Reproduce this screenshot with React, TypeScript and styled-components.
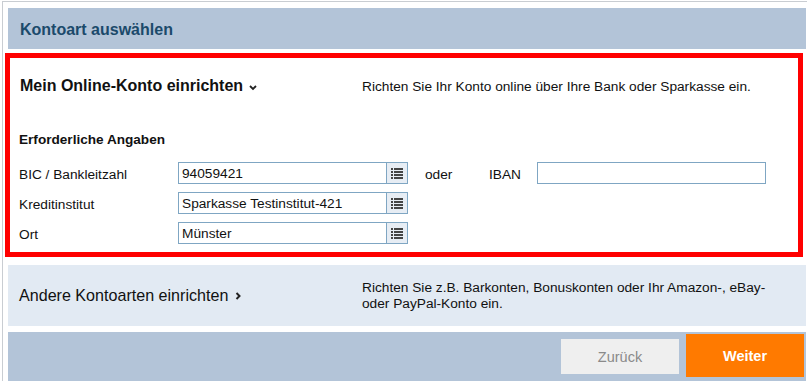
import React from 'react';
import styled, { createGlobalStyle } from 'styled-components';

const GlobalStyle = createGlobalStyle`
  body {
    margin: 0;
    background: #fff;
    font-family: "Liberation Sans", Arial, sans-serif;
    color: #111;
  }
`;

const ListIcon = () => (
  <svg width="14" height="14" viewBox="0 0 14 14">
    {[2, 5, 8, 11].map((y) => (
      <g key={y} fill="#444">
        <rect x="1" y={y} width="2" height="2" />
        <rect x="4" y={y} width="9" height="2" />
      </g>
    ))}
  </svg>
);

const Field = ({ value }: { value: string }) => (
  <FieldWrap>
    <Input defaultValue={value} />
    <ListButton>
      <ListIcon />
    </ListButton>
  </FieldWrap>
);

const App = () => {
  return (
    <>
      <GlobalStyle />
      <Frame>
        <Header>Kontoart auswählen</Header>

        <OnlinePanel>
          <TopRow>
            <Title>
              Mein Online-Konto einrichten
              <svg width="10" height="8" viewBox="0 0 10 8">
                <path d="M2 2 L5 5 L8 2" stroke="#222" strokeWidth="1.8" fill="none" />
              </svg>
            </Title>
            <Desc>Richten Sie Ihr Konto online über Ihre Bank oder Sparkasse ein.</Desc>
          </TopRow>

          <SubHeading>Erforderliche Angaben</SubHeading>

          <FormGrid>
            <Label>BIC / Bankleitzahl</Label>
            <Field value="94059421" />
            <Oder>oder</Oder>
            <IbanLabel>IBAN</IbanLabel>
            <IbanInput />

            <Label>Kreditinstitut</Label>
            <Field value="Sparkasse Testinstitut-421" />
            <span />
            <span />
            <span />

            <Label>Ort</Label>
            <Field value="Münster" />
          </FormGrid>
        </OnlinePanel>

        <OtherPanel>
          <OtherTitle>
            Andere Kontoarten einrichten
            <svg width="8" height="10" viewBox="0 0 8 10">
              <path d="M2.5 2 L5.5 5 L2.5 8" stroke="#222" strokeWidth="2" fill="none" />
            </svg>
          </OtherTitle>
          <OtherDesc>
            Richten Sie z.B. Barkonten, Bonuskonten oder Ihr Amazon-, eBay- oder PayPal-Konto ein.
          </OtherDesc>
        </OtherPanel>

        <Footer>
          <BackButton>Zurück</BackButton>
          <NextButton>Weiter</NextButton>
        </Footer>
      </Frame>
    </>
  );
};

const Frame = styled.div`
  margin: 1px 0 0 2px;
  border-top: 1px solid #c9cdd2;
  border-left: 1px solid #c9cdd2;
  padding: 6px 0 0 5px;
  display: flex;
  flex-direction: column;
  height: 380px;
  box-sizing: border-box;
  overflow: hidden;
  & > * {
    flex-shrink: 0;
  }
`;

const Header = styled.div`
  height: 41px;
  margin-right: 1px;
  background: #b3c4d8;
  color: #1b4a6b;
  font-weight: bold;
  font-size: 16px;
  display: flex;
  align-items: center;
  padding-left: 12px;
  padding-top: 2px;
  box-sizing: border-box;
`;

const OnlinePanel = styled.div`
  margin: 4px 4px 0 -3px;
  border: 5px solid #f00;
  height: 204px;
  box-sizing: border-box;
  padding: 18px 0 0 9px;
`;

const TopRow = styled.div`
  display: grid;
  grid-template-columns: 343px 1fr;
  align-items: center;
  height: 20px;
`;

const Title = styled.div`
  font-size: 16px;
  font-weight: bold;
  color: #111;
  display: flex;
  align-items: center;
  gap: 5px;
  padding-left: 1px;
  svg {
    margin-top: 3px;
  }
`;

const Desc = styled.div`
  font-size: 13.7px;
  color: #111;
`;

const SubHeading = styled.div`
  font-size: 13.6px;
  font-weight: bold;
  margin-top: 36px;
  height: 16px;
`;

const FormGrid = styled.div`
  display: grid;
  grid-template-columns: 159px 230px 81px 48px 229px;
  grid-auto-rows: 22px;
  row-gap: 8px;
  align-items: center;
  margin-top: 14px;
  font-size: 13.7px;
`;

const Label = styled.span`
  font-size: 13.7px;
  padding-top: 3px;
`;

const FieldWrap = styled.div`
  display: flex;
  height: 22px;
`;

const Input = styled.input`
  width: 208px;
  height: 22px;
  box-sizing: border-box;
  border: 1px solid #7fa6c3;
  border-right: none;
  padding: 0 3px;
  font-family: "Liberation Sans", Arial, sans-serif;
  font-size: 13.7px;
  color: #111;
  outline: none;
`;

const ListButton = styled.div`
  width: 22px;
  height: 22px;
  box-sizing: border-box;
  border: 1px solid #7fa6c3;
  background: #e7edf4;
  display: flex;
  align-items: center;
  justify-content: center;
`;

const Oder = styled.span`
  padding-left: 17px;
  padding-top: 2px;
`;

const IbanLabel = styled.span`
  padding-top: 2px;
`;

const IbanInput = styled.input`
  width: 229px;
  height: 22px;
  box-sizing: border-box;
  border: 1px solid #7fa6c3;
  outline: none;
`;

const OtherPanel = styled.div`
  margin: 8px 1px 0 0;
  height: 61px;
  background: #e2eaf3;
  display: grid;
  grid-template-columns: 343px 1fr;
  align-items: center;
  padding-left: 11px;
  box-sizing: border-box;
`;

const OtherTitle = styled.div`
  font-size: 16.1px;
  display: flex;
  align-items: center;
  gap: 6px;
  svg {
    margin-top: 1px;
  }
`;

const OtherDesc = styled.div`
  font-size: 13.7px;
  line-height: 16px;
  max-width: 412px;
`;

const Footer = styled.div`
  margin: 6px 1px 0 0;
  flex: 1;
  background: #b3c4d8;
  display: flex;
  align-items: flex-start;
  justify-content: flex-end;
  gap: 7px;
  padding: 2px 2px 0 0;
`;

const BackButton = styled.button`
  margin-top: 5px;
  width: 118px;
  height: 35px;
  border: none;
  background: #efefef;
  color: #8a8a8a;
  font-family: "Liberation Sans", Arial, sans-serif;
  font-size: 14.5px;
`;

const NextButton = styled.button`
  width: 118px;
  height: 43px;
  border: none;
  background: #ff7a00;
  color: #fff;
  font-weight: bold;
  font-family: "Liberation Sans", Arial, sans-serif;
  font-size: 14.5px;
`;

export default App;
